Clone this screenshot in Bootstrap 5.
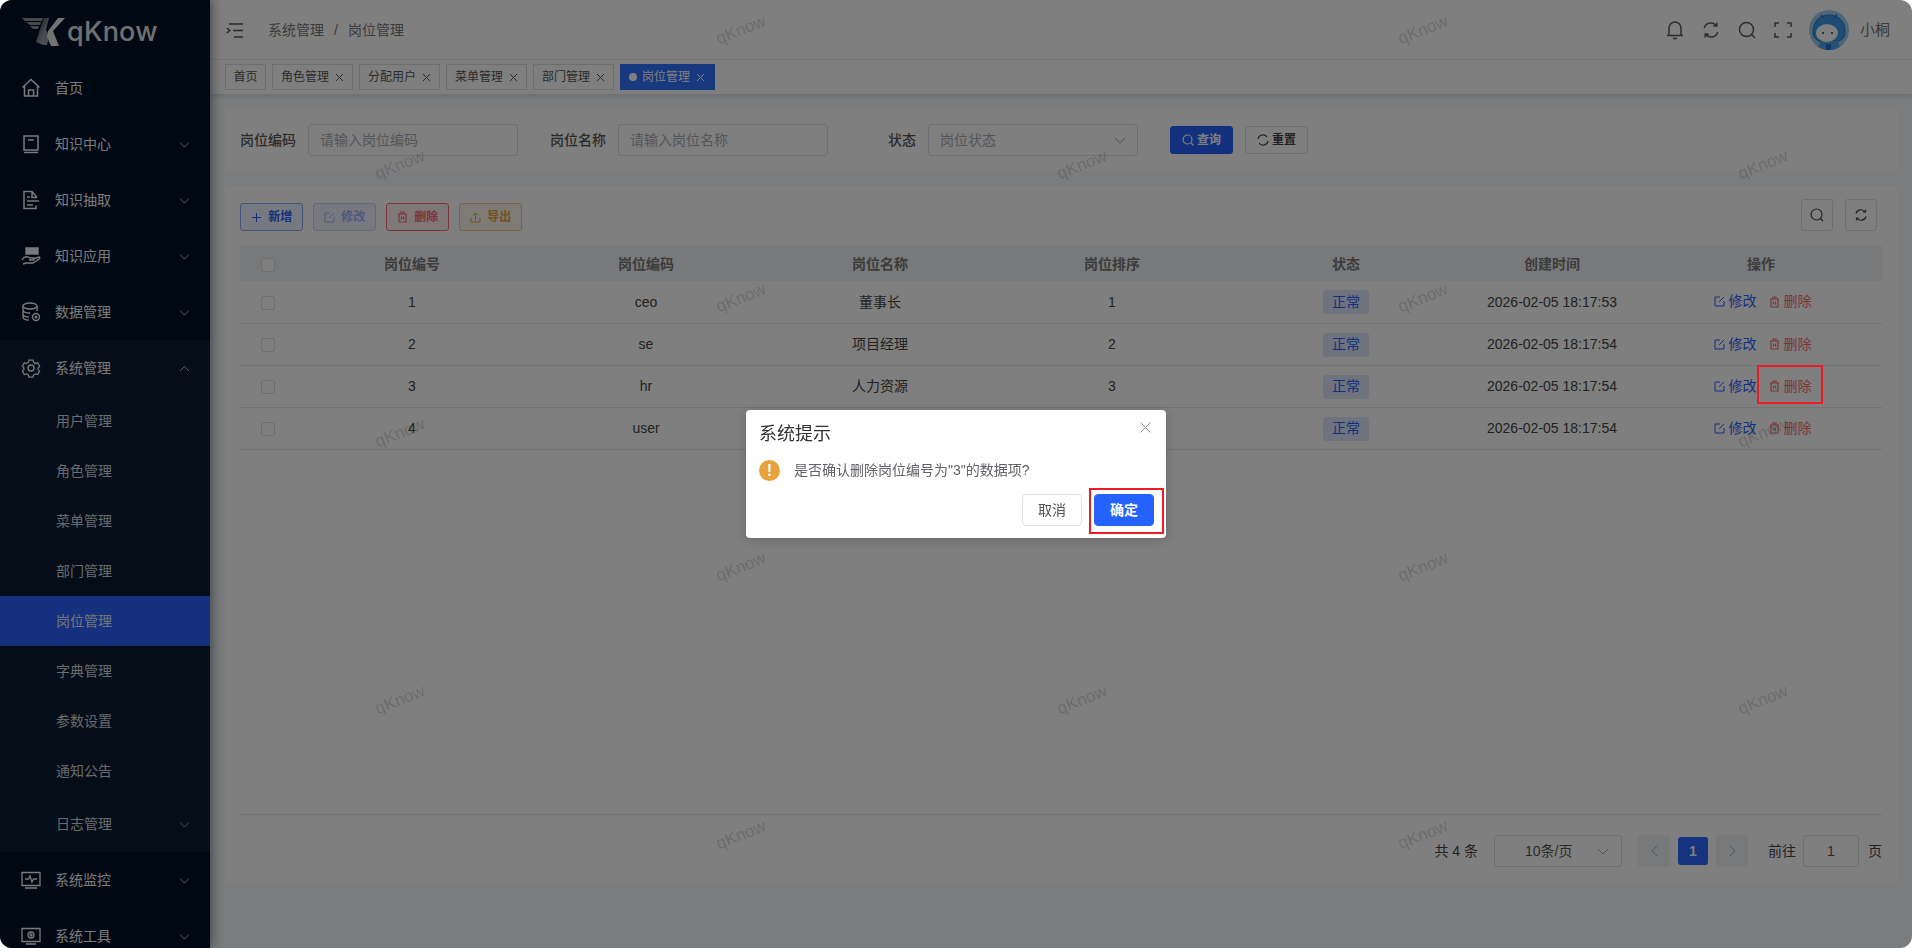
<!DOCTYPE html>
<html lang="zh-CN">
<head>
  <meta charset="UTF-8" />
  <meta name="viewport" content="width=device-width, initial-scale=1" />
  <title>岗位管理 - qKnow</title>
  <link href="https://cdn.jsdelivr.net/npm/bootstrap@5.3.3/dist/css/bootstrap.min.css" rel="stylesheet" />
  <style>
  html, body { height: 100%; background: #fff; overflow: hidden; }
  body { font-family: "Liberation Sans", "Noto Sans CJK SC", sans-serif; font-size: 14px; color: #555; }
  svg { flex: none; }

  .app-shell { position: relative; height: 948px; border-radius: 12px; overflow: hidden; background: #f6f8fc; }
  .modal-backdrop { border-radius: 12px; }

  /* sidebar */
  .side { width: 210px; flex: none; height: 948px; overflow: hidden; background: #001026; color: #f4f4f4; box-shadow: 2px 0 10px rgba(0,0,0,.45); position: relative; z-index: 3; }
  .side-logo { height: 60px; padding: 4px 0 0 22px; gap: 2px; }
  .logo-word { font-family: Inter, "Liberation Sans", sans-serif; font-size: 27px; font-weight: 500; letter-spacing: .2px; color: #e0e0e0; line-height: 1; position: relative; top: -1px; }
  .menu-row { height: 56px; padding-left: 21px; padding-right: 20px; gap: 14px; color: inherit; text-decoration: none; }
  .menu-row .chev { margin-left: auto; }
  .menu-open { background: #081a30; }
  .sub-row { height: 50px; padding-left: 56px; color: #d2d4d6; text-decoration: none; }
  .sub-row.active-sub { background: #2860fe; color: #e8ebf5; }
  .sub-last { height: 56px; padding-right: 20px; }
  .sub-last .chev { margin-left: auto; }

  /* header */
  .main-col { min-width: 0; }
  .top-head { height: 60px; background: #fff; border-bottom: 1px solid #f0f0f0; padding: 1px 22px 0 16px; }
  .crumbs { margin-left: 25px; color: #777; gap: 10px; }
  .head-tools { gap: 18px; color: #5a5a5a; }
  .head-ava { width: 40px; height: 40px; margin-left: -1px; }
  .head-user { color: #777; margin-left: -7px; font-size: 15px; }

  .tag-bar { height: 34px; background: #fff; padding: 4px 15px 0; gap: 6px; box-shadow: 0 2px 5px rgba(0,0,0,.12); position: relative; z-index: 1; }
  .tag-item { height: 26px; width: 81px; padding: 0 0 0 8px; border: 1px solid #ddd; font-size: 12px; color: #555; gap: 6px; white-space: nowrap; }
  .tag-home { width: 41px; padding: 0; justify-content: center; }
  .tag-on { width: 95px; background: #3070ff; border-color: #3070ff; color: #fff; }
  .tag-dot { width: 8px; height: 8px; border-radius: 50%; background: #fff; margin-right: -1px; }

  .page-body { padding: 15px; gap: 15px; flex: 1; min-height: 0; }
  .pane { background: #fff; border-radius: 3px; }
  .query-pane { height: 62px; padding: 15px; }
  .q-label { width: 68px; padding-right: 12px; text-align: right; color: #555; font-weight: 500; white-space: nowrap; flex: none; }
  .q-input { width: 210px !important; height: 32px; flex: none; padding: 0 11px; font-size: 14px; border: 1px solid #dcdfe6; border-radius: 3px; color: #a8abb2; margin-right: 32px; }
  .q-input::placeholder { color: #a8abb2; }
  .fake-sel { color: #a8abb2; }
  .act-btn { height: 28px; width: 63px; padding: 0; font-size: 12px; font-weight: 700; border-radius: 3px; gap: 3px; }
  .blue-btn { background: #2460fc; border: 1px solid #2460fc; color: #fff; }
  .line-btn { background: #fff; border: 1px solid #dcdfe6; color: #444; margin-left: 12px; }

  .list-pane { height: 697px; padding: 17px 15px 0; }
  .tool-row { margin-bottom: 15px; height: 28px; }
  .btn-gap { gap: 10px; }
  .plain-add { background: #edf2ff; border: 1px solid #85a6f8; color: #2860fe; }
  .plain-edit { background: #eef2ff; border: 1px solid #c3d2fb; color: #9bb4f5; }
  .plain-del { background: #fff0f0; border: 1px solid #f56c6c; color: #f56c6c; }
  .plain-exp { background: #fdf6ec; border: 1px solid #f0c78a; color: #e6a23c; }
  .round-tool { width: 32px; height: 32px; border: 1px solid #dcdfe6; border-radius: 3px; background: #fff; color: #444; margin-top: -4px; }
  .tools-end { gap: 12px; margin-right: 5px; }

  .job-table { table-layout: fixed; width: 1642px; margin: 0; --bs-table-bg: transparent; }
  .job-table th { height: 35px; padding: 1px 0 0; background: #f0f2f5; color: #777; font-weight: 700; text-align: center; vertical-align: middle; border: 0; }
  .job-table td { height: 42px; padding: 1px 0 0; text-align: center; vertical-align: middle; border-bottom: 1px solid #e6e6e6; color: #444; }
  .job-table th:nth-child(1) { width: 56px; }
  .job-table th:nth-child(2), .job-table th:nth-child(4), .job-table th:nth-child(5) { width: 232px; }
  .job-table th:nth-child(3), .job-table th:nth-child(6) { width: 236px; }
  .job-table th:nth-child(7) { width: 176px; }
  .job-table th:nth-child(8) { width: 242px; }
  .tick { display: inline-block; width: 14px; height: 14px; border: 1px solid #dcdfe6; border-radius: 2px; background: #fff; vertical-align: middle; }
  .state-tag { display: inline-flex; align-items: center; justify-content: center; width: 46px; height: 24px; border-radius: 3px; background: #dfe6fb; color: #2860fe; font-size: 14px; }
  .op-wrap { padding-left: 3px; }
  .op-link { text-decoration: none; gap: 4px; position: relative; }
  .op-edit { color: #2860fe; margin-right: 12px; }
  .op-del { color: #f56c6c; }
  .mark-box { position: absolute; border: 2px solid #ed1c24; z-index: 1060; pointer-events: none; }
  .mark-del { left: -12px; right: -11px; top: -11px; bottom: -7px; }
  .mark-ok { left: -6px; right: -11px; top: -7px; bottom: -9px; }

  .pager { height: 69px; border-top: 1px solid #e6e6e6; padding-top: 20px; color: #444; }
  .pg-select { width: 128px; height: 32px; border: 1px solid #dcdfe6; border-radius: 3px; padding: 0 12px 0 30px; margin: 0 16px; color: #555; background: #fff; }
  .pg-arrow { width: 32px; height: 32px; border-radius: 3px; background: #f0f2f5; color: #a8abb2; }
  .pg-num { width: 30px; height: 28px; margin: 2px 8px 0; border-radius: 3px; background: #2b66fe; color: #fff; font-weight: 700; }
  .pg-jump { width: 56px; height: 32px; border: 1px solid #dcdfe6; border-radius: 3px; margin: 0 9px 0 7px; background: #fff; color: #555; }
  .pg-label { line-height: 32px; }

  .wm-layer { position: absolute; inset: 0; pointer-events: none; z-index: 2; }
  .wm-text { position: absolute; transform: translate(-50%, -50%) rotate(-22deg); font-size: 17px; color: rgba(0,0,0,.17); white-space: nowrap; }

  /* confirm dialog */
  .confirm-box { max-width: 420px; }
  .confirm-box .modal-content { height: 128px; border: 0; border-radius: 4px; padding: 0 12px 0 13px; box-shadow: 0 2px 12px rgba(0,0,0,.2); }
  .confirm-title { font-size: 18px; line-height: 24px; color: #303133; font-weight: 400; margin: 12px 0 0; }
  .confirm-close { margin: 12px 3px 0 0; color: #909399; }
  .confirm-msg { margin-top: 12px; height: 24px; gap: 14px; color: #606266; }
  .confirm-warn { width: 21px; height: 21px; border-radius: 50%; background: #e6a23c; color: #fff; font-weight: 700; font-size: 16px; line-height: 21px; text-align: center; }
  .confirm-foot { margin-top: auto; margin-bottom: 12px; gap: 12px; }
  .dlg-btn { width: 60px; height: 32px; padding: 0; font-size: 14px; border-radius: 4px; }
  .dlg-cancel { background: #fff; border: 1px solid #dcdfe6; color: #555; }
  .dlg-ok { background: #2563ff; border: 1px solid #2563ff; color: #fff; font-weight: 700; position: relative; }
  </style>
</head>
<body>
  <div class="app-shell d-flex">

    <!-- Sidebar -->
    <aside class="side">
      <div class="side-logo d-flex align-items-center">
        <svg width="43" height="28" viewBox="0 0 43 28">
          <defs>
            <linearGradient id="lg1" x1="0" y1="0" x2="1" y2="1"><stop offset="0" stop-color="#fff" stop-opacity=".15"/><stop offset=".6" stop-color="#eee"/><stop offset="1" stop-color="#fff"/></linearGradient>
          </defs>
          <path d="M0 0h21l-1 3H3zM4 4h15l-1 3H8zM8 8h9l-1 3h-5z" fill="#bbb" opacity=".75"/>
          <path d="M22 0h5l-3 12 3 6-2 9h-4l-7-3 4-13z" fill="url(#lg1)" opacity=".6"/>
          <path d="M26 13 36 0h7L31 13l6 15h-8l-4-9z" fill="#e4e4e4"/>
        </svg>
        <span class="logo-word">qKnow</span>
      </div>

      <a class="menu-row d-flex align-items-center" href="#">
        <svg width="20" height="20" viewBox="0 0 20 20" fill="none" stroke="currentColor" stroke-width="1.5"><path d="M1.5 9.5 10 1.5l8.5 8M3.5 8v10h13V8M7.5 18v-6h5v6"/></svg>
        <span>首页</span>
      </a>
      <a class="menu-row d-flex align-items-center" href="#">
        <svg width="20" height="20" viewBox="0 0 20 20" fill="none" stroke="currentColor" stroke-width="1.5"><path d="M3 16V2h14v14zM3 18.5h14M7 6h6"/></svg>
        <span>知识中心</span>
        <svg class="chev" width="11" height="11" viewBox="0 0 11 11" fill="none" stroke="currentColor" stroke-opacity=".7"><path d="m1 3.5 4.5 4.5L10 3.5"/></svg>
      </a>
      <a class="menu-row d-flex align-items-center" href="#">
        <svg width="20" height="20" viewBox="0 0 20 20" fill="none" stroke="currentColor" stroke-width="1.5"><path d="M16 7.5 11 1.5H3v17h12v-3M11 1.5v6h5M6 7h3M6 11h12M6 15h6"/></svg>
        <span>知识抽取</span>
        <svg class="chev" width="11" height="11" viewBox="0 0 11 11" fill="none" stroke="currentColor" stroke-opacity=".7"><path d="m1 3.5 4.5 4.5L10 3.5"/></svg>
      </a>
      <a class="menu-row d-flex align-items-center" href="#">
        <svg width="20" height="20" viewBox="0 0 20 20" fill="none" stroke="currentColor" stroke-width="1.4"><path d="M5 2h12v6H5z" fill="currentColor"/><path d="M1 14c2-4 6-4 8-2h4c1 1 0 2-1 2H8M12 13l6-2c1 0 1 1 0 2l-6 4H5l-3 1"/></svg>
        <span>知识应用</span>
        <svg class="chev" width="11" height="11" viewBox="0 0 11 11" fill="none" stroke="currentColor" stroke-opacity=".7"><path d="m1 3.5 4.5 4.5L10 3.5"/></svg>
      </a>
      <a class="menu-row d-flex align-items-center" href="#">
        <svg width="20" height="20" viewBox="0 0 20 20" fill="none" stroke="currentColor" stroke-width="1.4"><ellipse cx="9" cy="4" rx="7" ry="3"/><path d="M2 4v11c0 2 3 3 6 3M16 4v5M2 8c0 2 3 3 7 3M2 12c0 2 3 3 6 3"/><circle cx="15" cy="15" r="3.5"/><circle cx="15" cy="15" r=".8" fill="currentColor"/></svg>
        <span>数据管理</span>
        <svg class="chev" width="11" height="11" viewBox="0 0 11 11" fill="none" stroke="currentColor" stroke-opacity=".7"><path d="m1 3.5 4.5 4.5L10 3.5"/></svg>
      </a>

      <div class="menu-open">
        <a class="menu-row d-flex align-items-center" href="#">
          <svg width="20" height="20" viewBox="0 0 20 20" fill="none" stroke="currentColor" stroke-width="1.4"><path d="M7.7 1.6h4.6l.6 2.4 2.3 1-.1.1 2.3-.6 2.2 3.9-1.7 1.6v2l1.7 1.6-2.2 3.9-2.3-.6-2.2 1.1-.6 2.4H7.7l-.6-2.4-2.2-1.1-2.3.6L.4 13.600l1.700-1.600v-2L.4 8.400l2.200-3.900 2.300.6 2.200-1.100z" transform="translate(1 .8) scale(.9)"/><circle cx="10" cy="10" r="3"/></svg>
          <span>系统管理</span>
          <svg class="chev" width="11" height="11" viewBox="0 0 11 11" fill="none" stroke="currentColor" stroke-opacity=".7"><path d="m1 8 4.500-4.500L10 8"/></svg>
        </a>
        <a class="sub-row d-flex align-items-center" href="#">用户管理</a>
        <a class="sub-row d-flex align-items-center" href="#">角色管理</a>
        <a class="sub-row d-flex align-items-center" href="#">菜单管理</a>
        <a class="sub-row d-flex align-items-center" href="#">部门管理</a>
        <a class="sub-row active-sub d-flex align-items-center" href="#">岗位管理</a>
        <a class="sub-row d-flex align-items-center" href="#">字典管理</a>
        <a class="sub-row d-flex align-items-center" href="#">参数设置</a>
        <a class="sub-row d-flex align-items-center" href="#">通知公告</a>
        <a class="sub-row sub-last d-flex align-items-center" href="#">
          <span>日志管理</span>
          <svg class="chev" width="11" height="11" viewBox="0 0 11 11" fill="none" stroke="currentColor" stroke-opacity=".7"><path d="m1 3.500 4.500 4.500L10 3.500"/></svg>
        </a>
      </div>

      <a class="menu-row d-flex align-items-center" href="#">
        <svg width="20" height="20" viewBox="0 0 20 20" fill="none" stroke="currentColor" stroke-width="1.3"><path d="M1 2.500h18v13H1zM4 18h12M4 9h3.500l1.500-3 2 6 1.500-3H16"/></svg>
        <span>系统监控</span>
        <svg class="chev" width="11" height="11" viewBox="0 0 11 11" fill="none" stroke="currentColor" stroke-opacity=".7"><path d="m1 3.500 4.500 4.500L10 3.500"/></svg>
      </a>
      <a class="menu-row d-flex align-items-center" href="#">
        <svg width="20" height="20" viewBox="0 0 20 20" fill="none" stroke="currentColor" stroke-width="1.3"><path d="M1 2.500h18v13H1zM5 18h10"/><circle cx="10" cy="9" r="3"/><circle cx="10" cy="9" r="1"/></svg>
        <span>系统工具</span>
        <svg class="chev" width="11" height="11" viewBox="0 0 11 11" fill="none" stroke="currentColor" stroke-opacity=".7"><path d="m1 3.500 4.500 4.500L10 3.500"/></svg>
      </a>
    </aside>

    <!-- Main -->
    <div class="main-col flex-grow-1 d-flex flex-column">
      <header class="top-head d-flex align-items-center">
        <svg width="17" height="15" viewBox="0 0 17 15" fill="none" stroke="#555" stroke-width="1.6"><path d="M3 1h14M7 7.500h10M8 14h9M.8 5l3 2.500L.8 10"/></svg>
        <div class="crumbs d-flex">
          <span>系统管理</span><span>/</span><span>岗位管理</span>
        </div>
        <div class="head-tools d-flex align-items-center ms-auto">
          <svg width="18" height="20" viewBox="0 0 18 20" fill="none" stroke="currentColor" stroke-width="1.5"><path d="M3 15V8a6 6 0 0 1 12 0v7M1 15.500h16M7 18.500h4"/></svg>
          <svg width="18" height="18" viewBox="0 0 18 18" fill="none" stroke="currentColor" stroke-width="1.500"><path d="M2.200 7A7 7 0 0 1 14.500 4.700M15.800 11A7 7 0 0 1 3.500 13.300"/><path d="m15 1.500-.3 3.500-3.400-.6M3 16.500l.3-3.500 3.400.6"/></svg>
          <svg width="18" height="18" viewBox="0 0 18 18" fill="none" stroke="currentColor" stroke-width="1.500"><circle cx="8.500" cy="8.500" r="7"/><path d="m13.500 13.500 3.500 3.500"/></svg>
          <svg width="18" height="16" viewBox="0 0 18 16" fill="none" stroke="currentColor" stroke-width="1.500"><path d="M1 5V1h4M13 1h4v4M17 11v4h-4M5 15H1v-4"/></svg>
          <svg class="head-ava" viewBox="0 0 40 40">
            <clipPath id="avaclip"><circle cx="20" cy="20" r="20"/></clipPath>
            <g clip-path="url(#avaclip)">
              <rect width="40" height="40" fill="#9ccbef"/>
              <path d="M4 22c0-12 8-17 16-17s16 5 16 16c0 6-3 9-6 10H10C7 30 4 27 4 22z" fill="#3a9ae8" stroke="#2076c2"/>
              <path d="M12 5l3 3M28 4l-2 4" stroke="#2076c2" stroke-width="1.500"/>
              <ellipse cx="18" cy="23" rx="11" ry="9" fill="#fff"/>
              <circle cx="14" cy="23" r="1" fill="#234"/><circle cx="23" cy="23" r="1" fill="#234"/>
              <path d="M8 40l3-8h18l3 8z" fill="#4aa3ec"/>
              <rect x="17" y="34" width="5" height="6" fill="#1f6fc4"/>
            </g>
          </svg>
          <span class="head-user">小桐</span>
        </div>
      </header>

      <div class="tag-bar d-flex">
        <span class="tag-item tag-home d-flex align-items-center">首页</span>
        <span class="tag-item d-flex align-items-center">角色管理<svg width="9" height="9" viewBox="0 0 9 9" stroke="currentColor"><path d="m1 1 7 7M8 1 1 8"/></svg></span>
        <span class="tag-item d-flex align-items-center">分配用户<svg width="9" height="9" viewBox="0 0 9 9" stroke="currentColor"><path d="m1 1 7 7M8 1 1 8"/></svg></span>
        <span class="tag-item d-flex align-items-center">菜单管理<svg width="9" height="9" viewBox="0 0 9 9" stroke="currentColor"><path d="m1 1 7 7M8 1 1 8"/></svg></span>
        <span class="tag-item d-flex align-items-center">部门管理<svg width="9" height="9" viewBox="0 0 9 9" stroke="currentColor"><path d="m1 1 7 7M8 1 1 8"/></svg></span>
        <span class="tag-item tag-on d-flex align-items-center"><i class="tag-dot"></i>岗位管理<svg width="9" height="9" viewBox="0 0 9 9" stroke="currentColor"><path d="m1 1 7 7M8 1 1 8"/></svg></span>
      </div>

      <main class="page-body d-flex flex-column">
        <section class="pane query-pane d-flex align-items-center">
          <label class="q-label">岗位编码</label>
          <input class="form-control q-input" placeholder="请输入岗位编码" />
          <label class="q-label">岗位名称</label>
          <input class="form-control q-input" placeholder="请输入岗位名称" />
          <label class="q-label">状态</label>
          <div class="q-input fake-sel d-flex align-items-center justify-content-between">岗位状态
            <svg width="12" height="12" viewBox="0 0 12 12" fill="none" stroke="#a8abb2"><path d="m1 4 5 5 5-5"/></svg>
          </div>
          <button class="btn act-btn blue-btn d-flex align-items-center justify-content-center" type="button">
            <svg width="12" height="12" viewBox="0 0 12 12" fill="none" stroke="currentColor" stroke-width="1.200"><circle cx="5.500" cy="5.500" r="4.500"/><path d="m9 9 2.500 2.500"/></svg>查询
          </button>
          <button class="btn act-btn line-btn d-flex align-items-center justify-content-center" type="button">
            <svg width="12" height="12" viewBox="0 0 12 12" fill="none" stroke="currentColor" stroke-width="1.200"><path d="M1 5a5 5 0 0 1 9-2M11 7a5 5 0 0 1-9 2"/></svg>重置
          </button>
        </section>

        <section class="pane list-pane d-flex flex-column">
          <div class="tool-row d-flex justify-content-between">
            <div class="d-flex btn-gap">
              <button class="btn act-btn plain-add d-flex align-items-center justify-content-center" type="button">
                <svg width="11" height="11" viewBox="0 0 11 11" stroke="currentColor"><path d="M5.500 1v9M1 5.500h9"/></svg>&nbsp;新增
              </button>
              <button class="btn act-btn plain-edit d-flex align-items-center justify-content-center" type="button">
                <svg width="11" height="11" viewBox="0 0 11 11" fill="none" stroke="currentColor"><path d="M6 1H1v9h9V5M5 6l5-5"/></svg>&nbsp;修改
              </button>
              <button class="btn act-btn plain-del d-flex align-items-center justify-content-center" type="button">
                <svg width="11" height="12" viewBox="0 0 11 12" fill="none" stroke="currentColor" stroke-width="1.200"><path d="M1 3h9M4 3V1h3v2M2 3v8h7V3M4.500 5.500v3M6.500 5.500v3"/></svg>&nbsp;删除
              </button>
              <button class="btn act-btn plain-exp d-flex align-items-center justify-content-center" type="button">
                <svg width="11" height="11" viewBox="0 0 11 11" fill="none" stroke="currentColor"><path d="M1 6v4h9V6M5.500 8V1M3 3.500 5.500 1 8 3.500"/></svg>&nbsp;导出
              </button>
            </div>
            <div class="tools-end d-flex">
              <span class="round-tool d-flex align-items-center justify-content-center"><svg width="14" height="14" viewBox="0 0 14 14" fill="none" stroke="currentColor" stroke-width="1.200"><circle cx="6.500" cy="6.500" r="5.500"/><path d="m10.500 10.500 2.500 2.500"/></svg></span>
              <span class="round-tool d-flex align-items-center justify-content-center"><svg width="12" height="12" viewBox="0 0 12 12" fill="none" stroke="currentColor" stroke-width="1.200"><path d="M1 4.500a5 5 0 0 1 9-1.500M11 7.500A5 5 0 0 1 2 9M10.500.500V3H8M1.500 11.500V9H4"/></svg></span>
            </div>
          </div>

          <div class="flex-grow-1">
            <table class="table job-table" id="jobTable">
              <thead>
                <tr><th><i class="tick"></i></th><th>岗位编号</th><th>岗位编码</th><th>岗位名称</th><th>岗位排序</th><th>状态</th><th>创建时间</th><th>操作</th></tr>
              </thead>
              <tbody id="jobRows"></tbody>
            </table>
          </div>

          <div class="pager d-flex justify-content-end">
            <span class="pg-label">共 4 条</span>
            <div class="pg-select d-flex align-items-center justify-content-between">10条/页
              <svg width="12" height="12" viewBox="0 0 12 12" fill="none" stroke="#a8abb2"><path d="m1 4 5 5 5-5"/></svg>
            </div>
            <span class="pg-arrow d-flex align-items-center justify-content-center"><svg width="9" height="12" viewBox="0 0 9 12" fill="none" stroke="currentColor"><path d="M7 1 2 6l5 5"/></svg></span>
            <span class="pg-num d-flex align-items-center justify-content-center">1</span>
            <span class="pg-arrow d-flex align-items-center justify-content-center"><svg width="9" height="12" viewBox="0 0 9 12" fill="none" stroke="currentColor"><path d="m2 1 5 5-5 5"/></svg></span>
            <span class="pg-label ms-3 ps-1">前往</span>
            <span class="pg-jump d-flex align-items-center justify-content-center">1</span>
            <span class="pg-label">页</span>
          </div>
        </section>
      </main>
    </div>

    <div class="wm-layer" id="wmLayer"></div>
  </div>

  <!-- Delete confirm -->
  <div class="modal-backdrop show"></div>
  <div class="modal d-block" tabindex="-1">
    <div class="modal-dialog modal-dialog-centered confirm-box">
      <div class="modal-content">
        <div class="d-flex justify-content-between align-items-start">
          <h5 class="confirm-title">系统提示</h5>
          <svg class="confirm-close" width="11" height="11" viewBox="0 0 11 11" stroke="currentColor"><path d="m.5.500 10 10M10.500.500l-10 10"/></svg>
        </div>
        <div class="confirm-msg d-flex align-items-center">
          <span class="confirm-warn">!</span>
          <span>是否确认删除岗位编号为"3"的数据项?</span>
        </div>
        <div class="confirm-foot d-flex justify-content-end">
          <button class="btn dlg-btn dlg-cancel" type="button">取消</button>
          <button class="btn dlg-btn dlg-ok" type="button">确定<span class="mark-box mark-ok"></span></button>
        </div>
      </div>
    </div>
  </div>

  <script>
    const jobRows = [
      { id: 1, code: "ceo", name: "董事长", time: "2026-02-05 18:17:53" },
      { id: 2, code: "se", name: "项目经理", time: "2026-02-05 18:17:54" },
      { id: 3, code: "hr", name: "人力资源", time: "2026-02-05 18:17:54" },
      { id: 4, code: "user", name: "普通员工", time: "2026-02-05 18:17:54" }
    ];

    const editIcon = '<svg width="11" height="11" viewBox="0 0 11 11" fill="none" stroke="currentColor"><path d="M6 1H1v9h9V5M5 6l5-5"/></svg>';
    const trashIcon = '<svg width="11" height="12" viewBox="0 0 11 12" fill="none" stroke="currentColor" stroke-width="1.200"><path d="M1 3h9M4 3V1h3v2M2 3v8h7V3M4.500 5.500v3M6.500 5.500v3"/></svg>';

    document.getElementById("jobRows").innerHTML = jobRows.map(r => `
      <tr>
        <td><i class="tick"></i></td>
        <td>${r.id}</td>
        <td>${r.code}</td>
        <td>${r.name}</td>
        <td>${r.id}</td>
        <td><span class="state-tag">正常</span></td>
        <td>${r.time}</td>
        <td>
          <span class="op-wrap d-inline-flex">
            <a class="op-link op-edit d-inline-flex align-items-center" href="#">${editIcon}修改</a>
            <a class="op-link op-del d-inline-flex align-items-center" href="#">${trashIcon}删除${r.id === 3 ? '<span class="mark-box mark-del"></span>' : ''}</a>
          </span>
        </td>
      </tr>`).join("");

    // watermark grid, every other row is shifted by one cell
    const wmCols = [400, 741, 1082, 1423, 1763];
    const wmRowsY = [30, 165, 298, 433, 567, 700, 835];
    let wmHtml = "";
    wmRowsY.forEach((y, i) => {
      wmCols.forEach((x, j) => {
        if ((i + j) % 2 === 1) {
          wmHtml += `<span class="wm-text" style="left:${x}px;top:${y}px">qKnow</span>`;
        }
      });
    });
    document.getElementById("wmLayer").innerHTML = wmHtml;
  </script>
  <script src="https://cdn.jsdelivr.net/npm/bootstrap@5.3.3/dist/js/bootstrap.bundle.min.js"></script>
</body>
</html>
